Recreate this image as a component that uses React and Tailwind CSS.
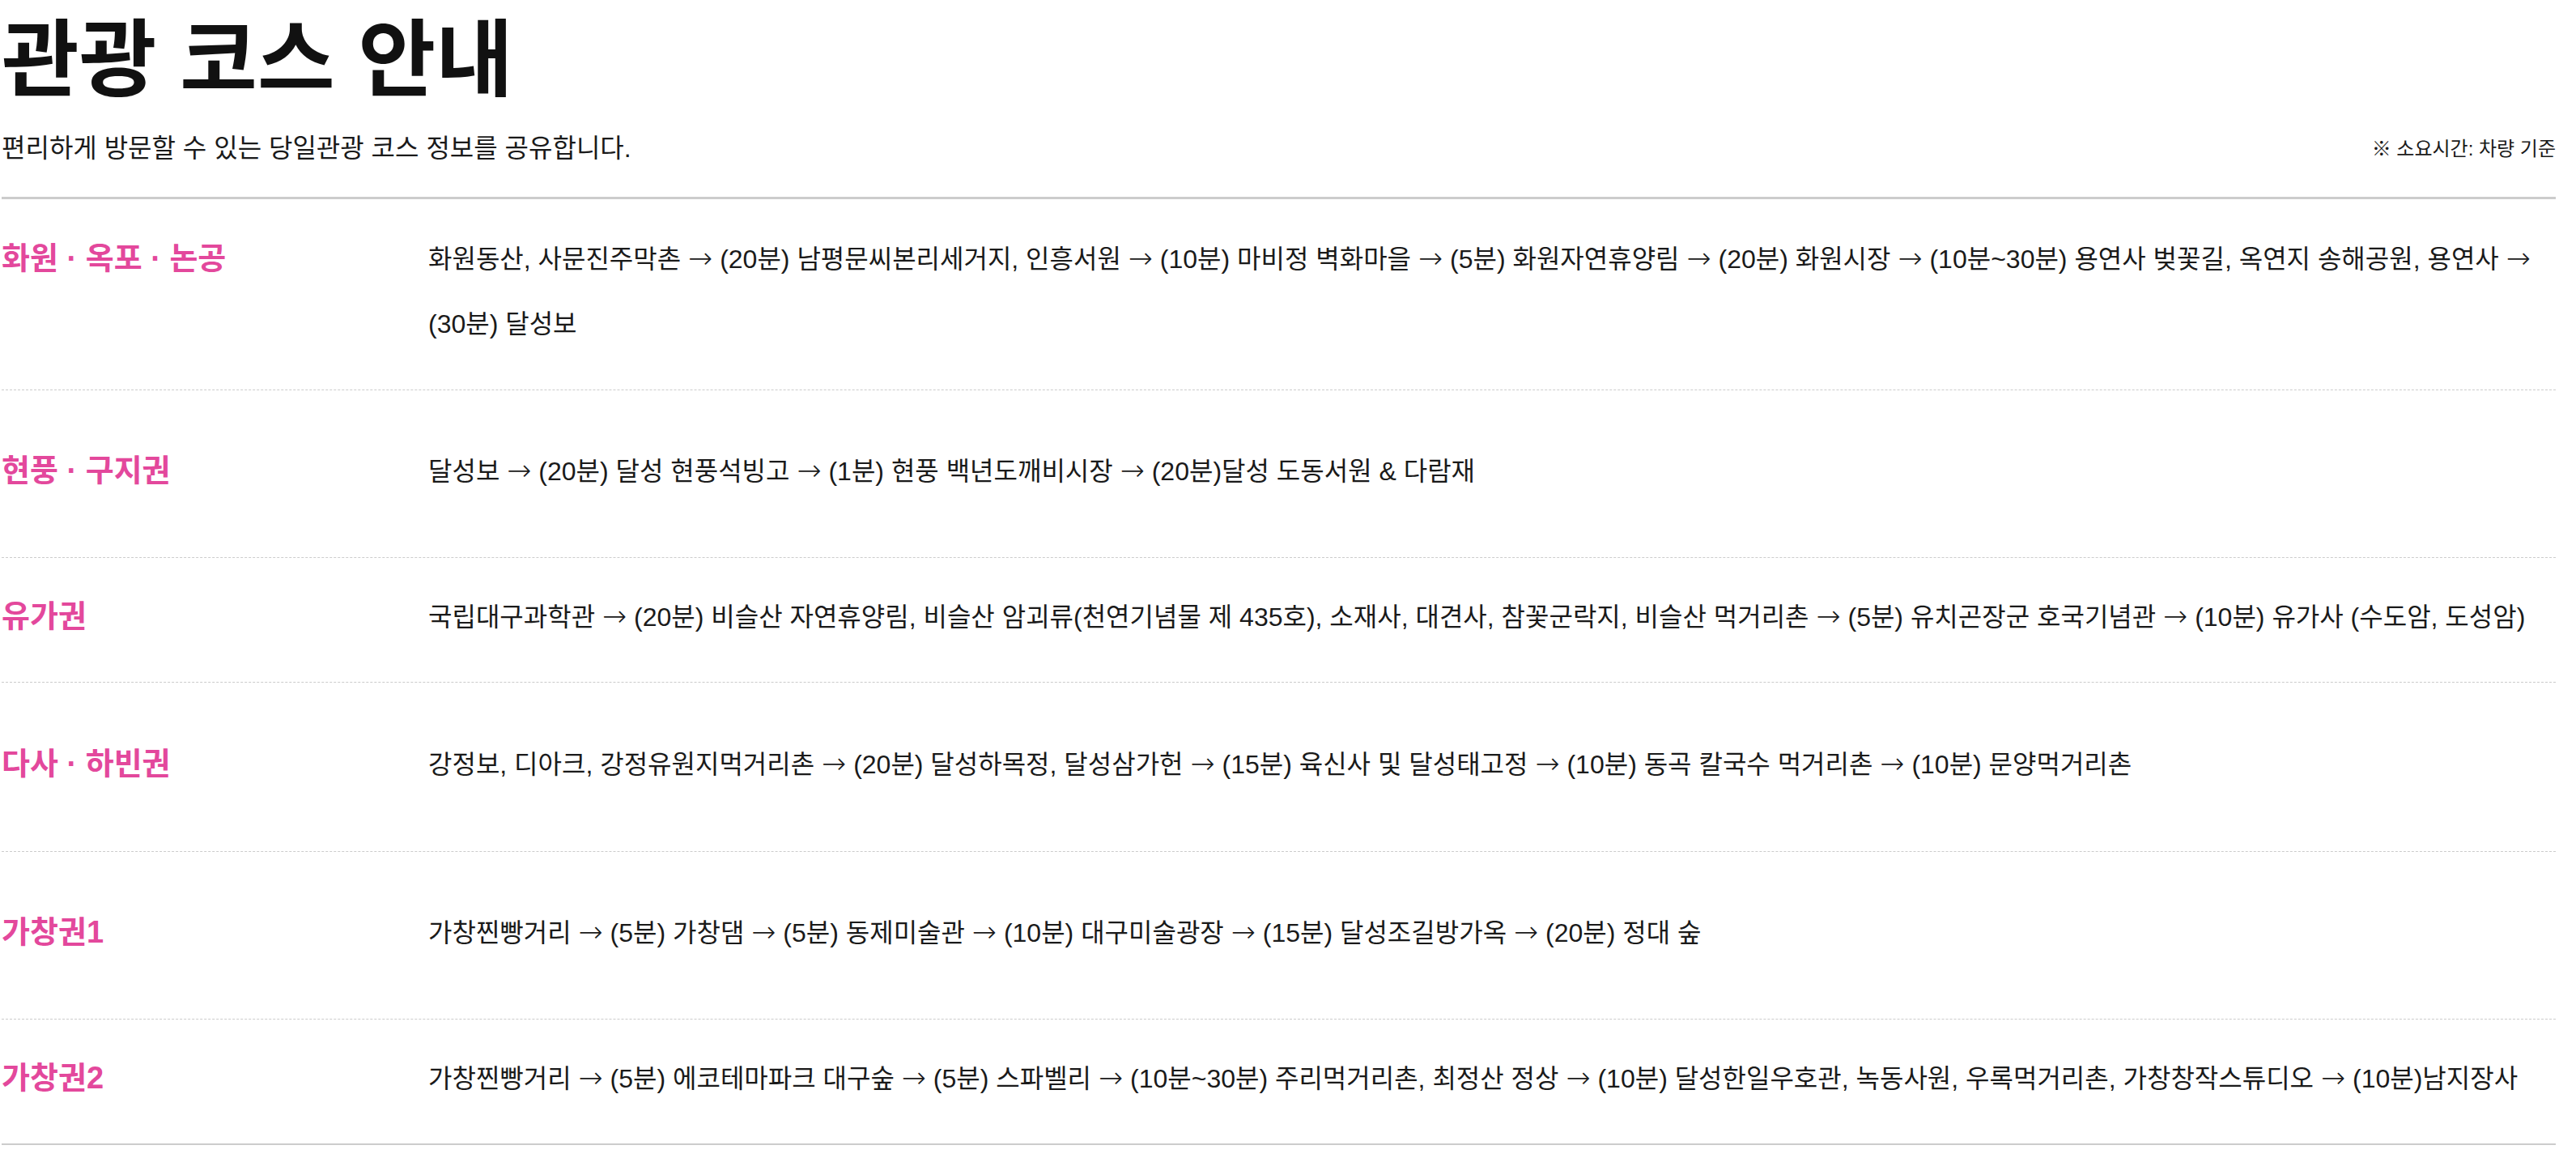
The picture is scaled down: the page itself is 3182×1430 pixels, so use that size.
const courses = [
  {
    area: "화원 · 옥포 · 논공",
    route:
      "화원동산, 사문진주막촌 → (20분) 남평문씨본리세거지, 인흥서원 → (10분) 마비정 벽화마을 → (5분) 화원자연휴양림 → (20분) 화원시장 → (10분~30분) 용연사 벚꽃길, 옥연지 송해공원, 용연사 → (30분) 달성보",
    height: "h-[236px]",
  },
  {
    area: "현풍 · 구지권",
    route: "달성보 → (20분) 달성 현풍석빙고 → (1분) 현풍 백년도깨비시장 → (20분)달성 도동서원 & 다람재",
    height: "h-[207px]",
  },
  {
    area: "유가권",
    route:
      "국립대구과학관 → (20분) 비슬산 자연휴양림, 비슬산 암괴류(천연기념물 제 435호), 소재사, 대견사, 참꽃군락지, 비슬산 먹거리촌 → (5분) 유치곤장군 호국기념관 → (10분) 유가사 (수도암, 도성암)",
    height: "h-[154px]",
  },
  {
    area: "다사 · 하빈권",
    route:
      "강정보, 디아크, 강정유원지먹거리촌 → (20분) 달성하목정, 달성삼가헌 → (15분) 육신사 및 달성태고정 → (10분) 동곡 칼국수 먹거리촌 → (10분) 문양먹거리촌",
    height: "h-[209px]",
  },
  {
    area: "가창권1",
    route: "가창찐빵거리 → (5분) 가창댐 → (5분) 동제미술관 → (10분) 대구미술광장 → (15분) 달성조길방가옥 → (20분) 정대 숲",
    height: "h-[207px]",
  },
  {
    area: "가창권2",
    route:
      "가창찐빵거리 → (5분) 에코테마파크 대구숲 → (5분) 스파벨리 → (10분~30분) 주리먹거리촌, 최정산 정상 → (10분) 달성한일우호관, 녹동사원, 우록먹거리촌, 가창창작스튜디오 → (10분)남지장사",
    height: "h-[155px]",
  },
];

// arrows get their own font so they come out long and thin like the original
function Route({ text }) {
  const parts = text.split("→");
  return parts.map((part, i) => (
    <span key={i}>
      {part}
      {i < parts.length - 1 && <span className="font-['DejaVu_Sans',sans-serif] text-[36px] font-light">→</span>}
    </span>
  ));
}

export default function App() {
  return (
    <div className="min-h-screen bg-white font-['Liberation_Sans','Noto_Sans_CJK_KR',sans-serif] text-[#1a1a1a]">
      <div className="ml-[2px] w-[3155px]">
        <div className="flex items-end justify-between border-b-[3px] border-[#cccccc] pb-[40px]">
          <div>
            <h1 className="pt-[15px] text-[104px] font-bold leading-[120px] text-[#111]">관광 코스 안내</h1>
            <p className="mt-[28px] text-[32px] leading-[40px]">편리하게 방문할 수 있는 당일관광 코스 정보를 공유합니다.</p>
          </div>
          <p className="mb-[2px] text-[24px] leading-[34px]">※ 소요시간: 차량 기준</p>
        </div>

        {courses.map((c, i) => (
          <div
            key={c.area}
            className={
              "grid grid-cols-[527px_1fr] content-center items-start pb-[8px] " +
              c.height +
              (i === courses.length - 1 ? " border-b-2 border-[#cccccc]" : " border-b border-dashed border-[#cccccc]")
            }
          >
            <h2 className="text-[38px] font-bold leading-[80px] text-[#e3489c]">{c.area}</h2>
            <p className="text-[32px] leading-[80px]">
              <Route text={c.route} />
            </p>
          </div>
        ))}
      </div>
    </div>
  );
}
